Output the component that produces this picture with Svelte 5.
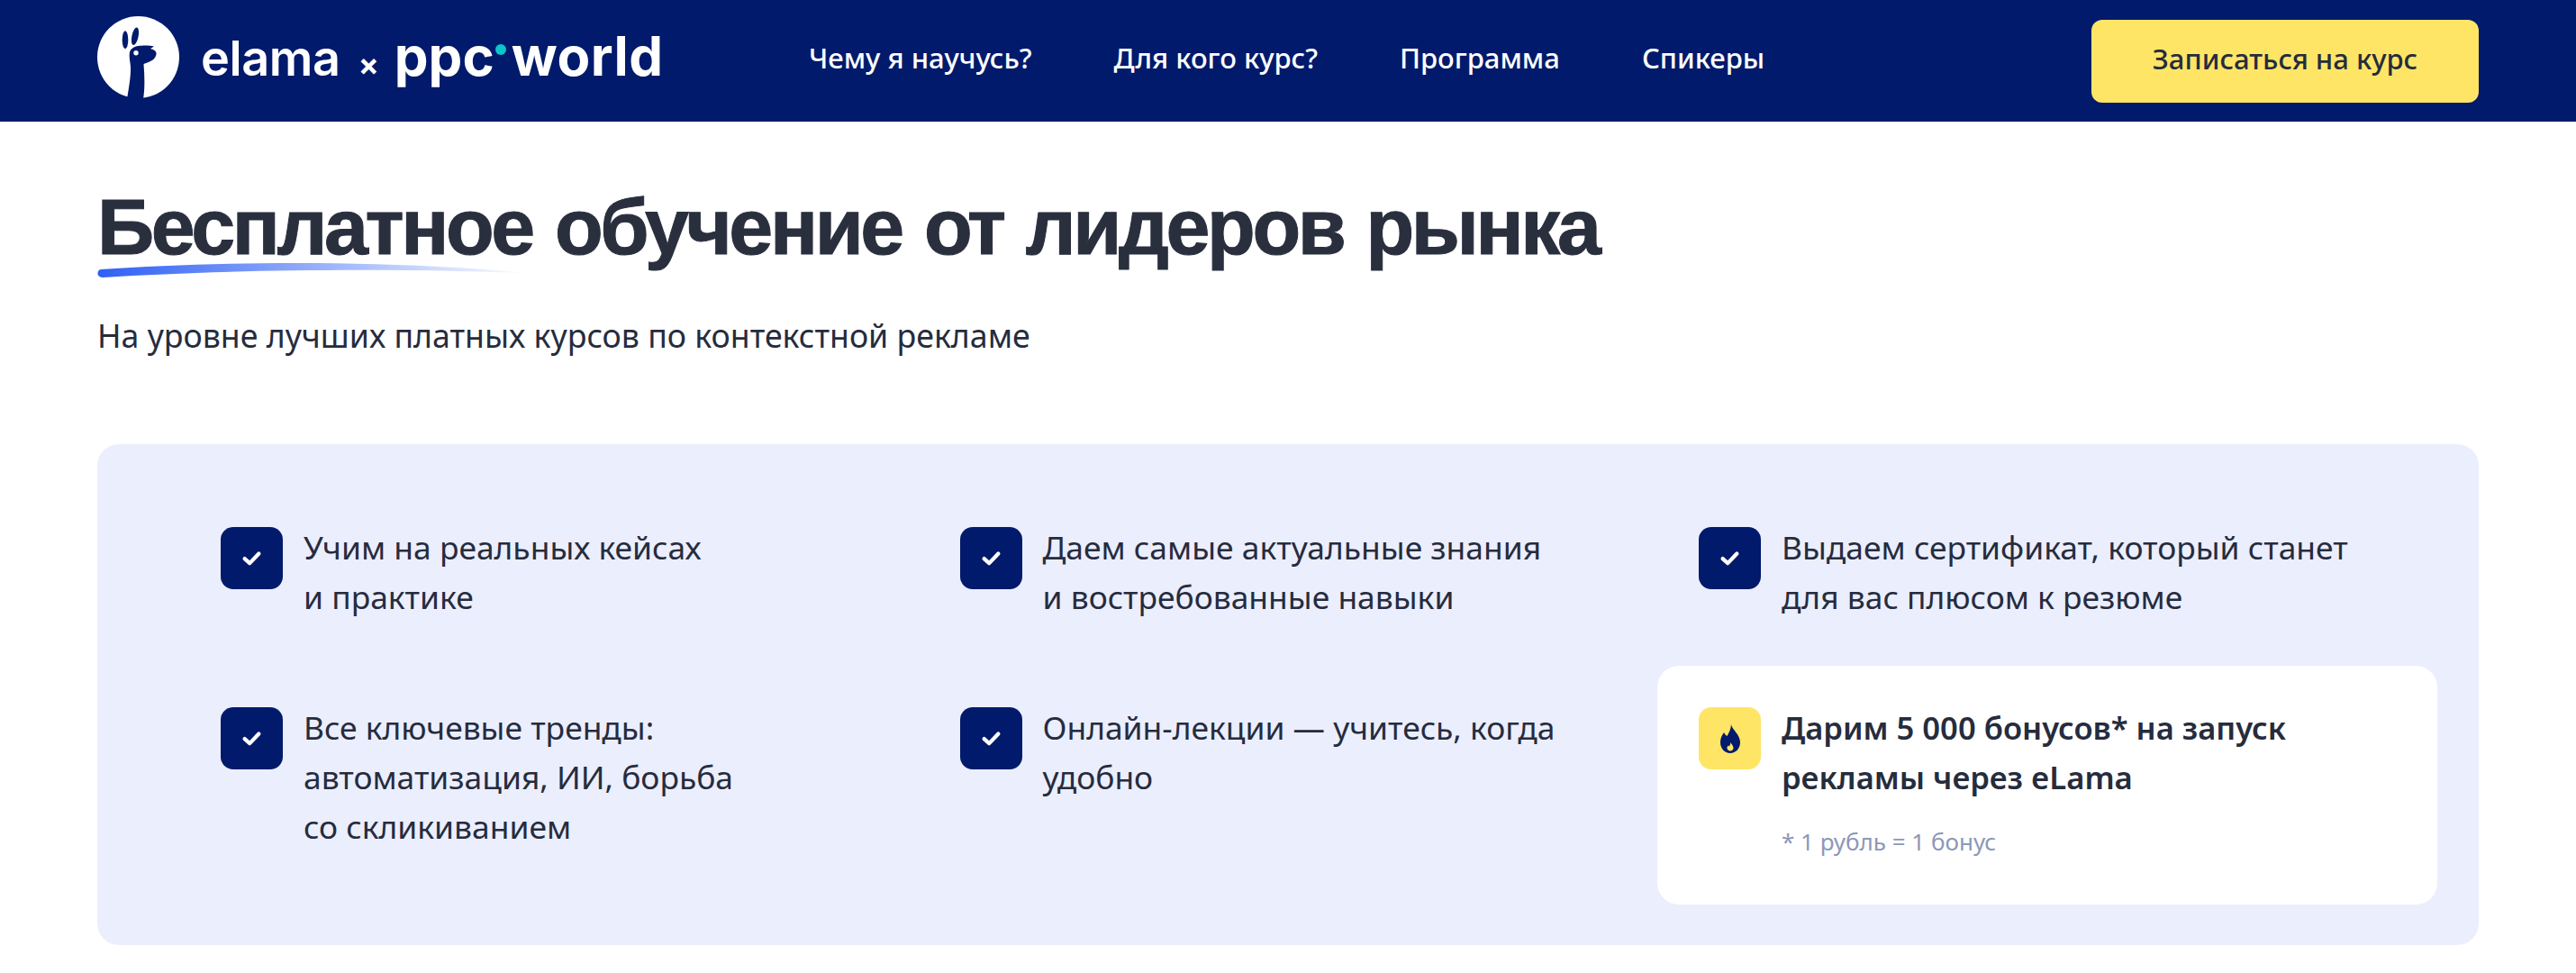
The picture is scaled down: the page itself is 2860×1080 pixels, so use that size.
<script>
  const items = [
    ['Учим на реальных кейсах', 'и практике'],
    ['Даем самые актуальные знания', 'и востребованные навыки'],
    ['Выдаем сертификат, который станет', 'для вас плюсом к резюме'],
    ['Все ключевые тренды:', 'автоматизация, ИИ, борьба', 'со скликиванием'],
    ['Онлайн-лекции — учитесь, когда', 'удобно']
  ];
  const nav = ['Чему я научусь?', 'Для кого курс?', 'Программа', 'Спикеры'];
</script>

<header class="header">
  <div class="logo">
    <svg class="llama" viewBox="0 0 91 91" aria-hidden="true">
      <circle cx="45.5" cy="45.5" r="45.5" fill="#fff"/>
      <path d="M33 92 C35 80 37.5 66 37 56 C36.5 50 35 45 36 40 C37 36 41 33.5 45.5 33 C50 32.5 57 32 63 33.5 L59 36 C63 37 66 39 65.5 42 C65 46 62 49 58 50.5 C55.5 51.5 53 52.5 51.5 53 C52.5 66 53 80 51 92 Z" fill="#021a6b"/>
      <ellipse cx="31" cy="26.3" rx="3.3" ry="10" fill="#021a6b"/>
      <ellipse cx="42" cy="22.3" rx="3.6" ry="10" transform="rotate(12 42 22.3)" fill="#021a6b"/>
      <circle cx="43" cy="40.7" r="2.7" fill="#fff"/>
    </svg>
    <div class="wordmark">
      <span class="elama">elama</span>
      <span class="times">×</span>
      <span class="ppc">ppc<i class="dot"></i><span class="world">world</span></span>
    </div>
  </div>
  <nav class="nav">
    {#each nav as n}<a href="#top">{n}</a>{/each}
  </nav>
  <button class="cta"><span>Записаться на курс</span></button>
</header>

<main class="main">
  <h1 class="title">
    <span class="mark">Бесплатное
      <svg class="swoosh" viewBox="0 0 480 18" preserveAspectRatio="none" aria-hidden="true">
        <defs>
          <linearGradient id="sw" x1="0" x2="1" y1="0" y2="0">
            <stop offset="0" stop-color="#2f5ff5"/>
            <stop offset="0.5" stop-color="#94aefb"/>
            <stop offset="1" stop-color="#ffffff"/>
          </linearGradient>
        </defs>
        <path d="M4 9 C130 1 300 -3 480 13 C300 7 130 10 6 18 C-1 18 -1 10 4 9 Z" fill="url(#sw)"/>
      </svg>
    </span> обучение от лидеров рынка
  </h1>
  <p class="sub">На уровне лучших платных курсов по контекстной рекламе</p>

  <section class="panel">
    {#each items as lines}
      <div class="item">
        <span class="badge">
          <svg viewBox="0 0 24 24" width="27" height="27" aria-hidden="true">
            <path d="M5 12.5 L10 17 L19 7.5" fill="none" stroke="#fff" stroke-width="3.8" stroke-linecap="round" stroke-linejoin="round"/>
          </svg>
        </span>
        <div class="text">{#each lines as l}<div>{l}</div>{/each}</div>
      </div>
    {/each}
    <div class="item promo">
      <span class="badge yellow">
        <svg viewBox="0 0 24 32" width="24" height="32" aria-hidden="true">
          <path d="M13 0 C14 6 23 11 23 20 C23 27 18 32 12 32 C6 32 1 27 1 20 C1 15 3 12 5 9 C6 11 7 12 8.5 13 C10.5 9 13 5 13 0 Z" fill="#021a6b"/>
          <path d="M12.5 20 C13 22 15.5 23.5 15.5 26 C15.5 28 14 29.5 12 29.5 C10 29.5 8.5 28 8.5 26 C8.5 25 9 24.5 9.8 23.5 C10.3 24 10.8 24.3 11 24.5 C11.7 23 12.3 21.5 12.5 20 Z" fill="#ffe566"/>
        </svg>
      </span>
      <div>
        <div class="text strong"><div>Дарим 5 000 бонусов* на запуск</div><div>рекламы через eLama</div></div>
        <div class="note">* 1 рубль = 1 бонус</div>
      </div>
    </div>
  </section>
</main>

<style>
  :global(body) { margin: 0; background: #fff; }
  .header {
    height: 135px;
    background: #021a6b;
    display: flex;
    align-items: center;
    padding: 0 108px;
    font-family: "Noto Sans", sans-serif;
    box-sizing: border-box;
  }
  .logo { display: flex; align-items: center; width: 790px; color: #fff; font-family: Inter, sans-serif; flex: none; }
  .llama { width: 91px; height: 91px; flex: none; margin-top: -9px; }
  .wordmark { display: flex; align-items: baseline; margin-top: -11px; }
  .elama { margin-left: 24px; font-size: 54px; font-weight: 600; line-height: 1; letter-spacing: -0.4px; }
  .times { margin-left: 20px; font-size: 34px; font-weight: 700; line-height: 1; }
  .ppc { margin-left: 17px; font-size: 60px; line-height: 1; font-weight: 700; display: flex; align-items: baseline; }
  .dot { width: 12px; height: 12px; border-radius: 50%; background: #0cc4cc; margin: 0 6px 0 1px; align-self: center; position: relative; top: -7px; }
  .world { letter-spacing: 0.5px; }
  .nav { display: flex; gap: 91px; margin-top: -7px; }
  .nav a { color: #fff; font-size: 31px; font-weight: 500; text-decoration: none; white-space: nowrap; }
  .cta {
    margin-left: auto; width: 430px; height: 92px; border: 0; border-radius: 12px;
    background: #ffe566; color: #262c3d; font: 500 31px "Noto Sans", sans-serif;
  }
  .cta span { position: relative; top: -3px; }
  .main { padding: 0 108px; }
  .title {
    margin: 0; padding-top: 64px; color: #2a2f3e;
    font: 700 88px/106px "Liberation Sans", sans-serif; letter-spacing: -3.4px; word-spacing: 4px; white-space: nowrap;
    -webkit-text-stroke: 1px #2a2f3e;
  }
  .mark { position: relative; display: inline-block; }
  .swoosh { position: absolute; left: 0; top: 91px; width: 480px; height: 18px; }
  .sub { margin: 44px 0 0; color: #262c3d; font: 400 35.7px/46px "Noto Sans", sans-serif; }
  .panel {
    margin-top: 98px;
    background: #ebeefd;
    border-radius: 24px;
    box-sizing: border-box;
    height: 556px;
    padding: 92px 92px 45px 137px;
    display: grid;
    grid-template-columns: repeat(3, 774px);
    grid-auto-rows: min-content;
    column-gap: 46.5px;
    row-gap: 95px;
    font-family: "Noto Sans", sans-serif;
  }
  .item { display: flex; gap: 23px; align-items: flex-start; }
  .badge {
    width: 69px; height: 69px; border-radius: 14px; background: #021a6b;
    display: flex; align-items: center; justify-content: center; flex: none;
  }
  .badge.yellow { background: #ffe566; }
  .text { font-size: 35.4px; line-height: 55px; color: #262c3d; margin-top: -5px; }
  .strong { font-weight: 600; font-size: 34.6px; }
  .promo { background: #fff; border-radius: 24px; padding: 46px 46px 52px; margin: -46px; }
  .note { margin-top: 26px; color: #8d97b8; font-size: 26px; line-height: 36px; }
</style>
